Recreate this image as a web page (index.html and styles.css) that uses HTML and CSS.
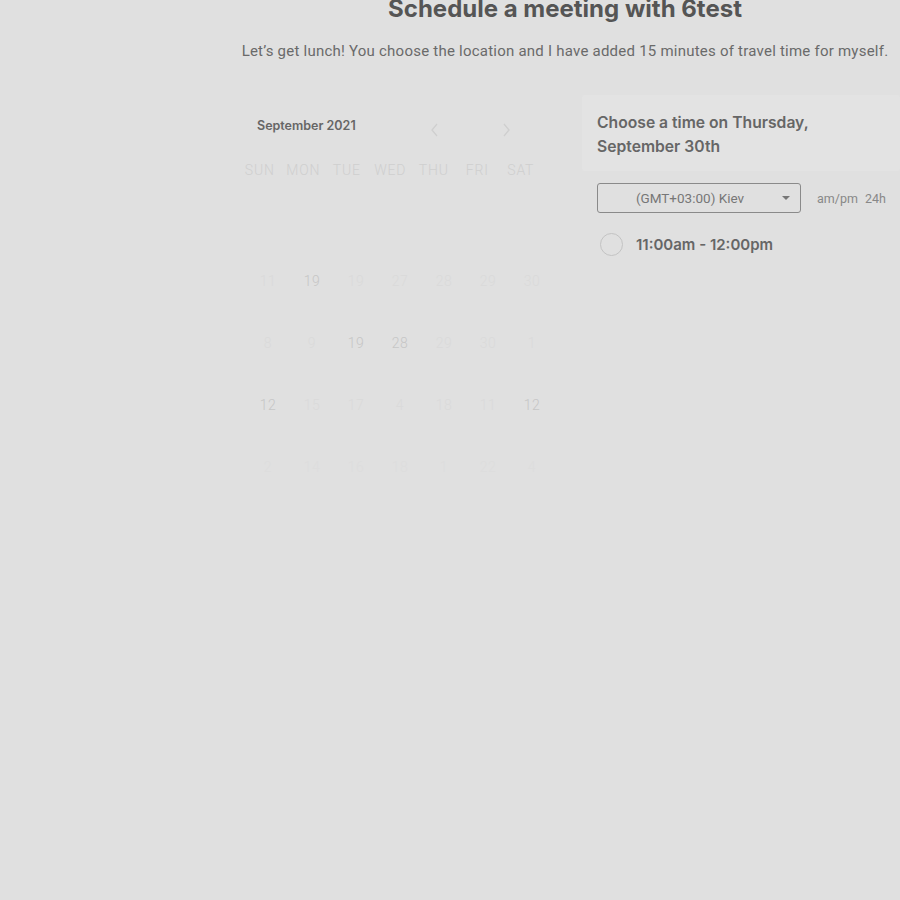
FILE: index.html
```html
<!DOCTYPE html>
<html>
<head>
<meta charset="utf-8">
<link rel="stylesheet" href="styles.css">
</head>
<body>
<div class="page">
  <header class="head">
    <h1 class="title">Schedule a meeting with 6test</h1>
    <p class="subtitle">Let’s get lunch! You choose the location and I have added 15 minutes of travel time for myself.</p>
  </header>
  <div class="main">
    <section class="cal">
      <div class="cal-top">
        <span class="month">September 2021</span>
        <span class="nav nav-prev"><svg width="10" height="14" viewBox="0 0 10 14"><path d="M7 1 L2 7 L7 13" fill="none" stroke="#cfcfcf" stroke-width="1.3"/></svg></span>
        <span class="nav nav-next"><svg width="10" height="14" viewBox="0 0 10 14"><path d="M3 1 L8 7 L3 13" fill="none" stroke="#cfcfcf" stroke-width="1.3"/></svg></span>
      </div>
      <div class="wdays">
        <span>SUN</span><span>MON</span><span>TUE</span><span>WED</span><span>THU</span><span>FRI</span><span>SAT</span>
      </div>
      <div class="dates">
        <span></span><span></span><span></span><span></span><span></span><span></span><span></span>
        <span class="f">11</span><span class="m">19</span><span class="f">19</span><span class="f">27</span><span class="f">28</span><span class="f">29</span><span class="f">30</span>
        <span class="f">8</span><span class="f">9</span><span class="m">19</span><span class="m">28</span><span class="f">29</span><span class="f">30</span><span class="f">1</span>
        <span class="m">12</span><span class="f">15</span><span class="f">17</span><span class="f">4</span><span class="f">18</span><span class="f">11</span><span class="m">12</span>
        <span class="ff">2</span><span class="ff">14</span><span class="ff">16</span><span class="ff">18</span><span class="ff">1</span><span class="ff">22</span><span class="ff">4</span>
      </div>
    </section>
    <section class="panel">
      <div class="panel-head">Choose a time on Thursday, September 30th</div>
      <div class="tz-row">
        <div class="select">
          <span class="select-text">(GMT+03:00) Kiev</span>
          <svg class="caret" width="8" height="4" viewBox="0 0 8 4"><path d="M0 0 L8 0 L4 4 Z" fill="#777"/></svg>
        </div>
        <div class="fmt"><span>am/pm</span><span>24h</span></div>
      </div>
      <div class="slot">
        <span class="radio"></span>
        <span class="slot-text">11:00am - 12:00pm</span>
      </div>
    </section>
  </div>
</div>
</body>
</html>
```

FILE: styles.css
```css
html, body {
  margin: 0;
  padding: 0;
  background: #e0e0e0;
  height: 100%;
}
body {
  font-family: Roboto, "Liberation Sans", sans-serif;
  color: #666;
  overflow: hidden;
}
.page {
  margin-left: 241px;
  width: 648px;
}
.head {
  text-align: center;
}
.title {
  margin: -6px 0 0 0;
  font-family: Inter, sans-serif;
  font-size: 24px;
  line-height: 30px;
  font-weight: 700;
  color: #555;
}
.subtitle {
  margin: 17px 0 0 0;
  font-size: 15px;
  line-height: 20px;
  color: #6a6a6a;
  letter-spacing: 0.23px;
  white-space: nowrap;
}
.main {
  display: flex;
  margin-left: -3px;
  margin-top: 34px;
  gap: 23px;
}
.cal {
  width: 321px;
  flex: none;
}
.cal-top {
  display: flex;
  align-items: center;
  height: 30px;
  margin-top: 20px;
  padding-left: 19px;
}
.month {
  font-family: Inter, sans-serif;
  font-size: 12.5px;
  font-weight: 600;
  color: #666;
  width: 173px;
  margin-top: -9px;
}
.nav {
  display: flex;
  align-items: center;
}
.nav-next {
  margin-left: 61px;
}
.wdays {
  display: grid;
  grid-template-columns: repeat(7, 43.5px);
  margin-top: 15px;
  height: 20px;
  align-items: center;
}
.wdays span {
  text-align: center;
  font-size: 14px;
  font-weight: 300;
  letter-spacing: 0.8px;
  color: #cfcfcf;
}
.dates {
  display: grid;
  grid-template-columns: repeat(7, 44px);
  grid-auto-rows: 62px;
  padding-left: 8px;
  margin-top: 8px;
  align-items: center;
}
.dates span {
  text-align: center;
  font-size: 14px;
  font-weight: 300;
  letter-spacing: 0.5px;
  height: 20px;
  line-height: 20px;
}
.dates .m { color: #c6c6c6; }
.dates .f { color: #dadada; }
.dates .ff { color: #dddddd; }
.panel {
  width: 318px;
  flex: none;
}
.panel-head {
  background: #e3e3e3;
  padding: 16px 60px 12px 15px;
  font-family: Inter, sans-serif;
  font-size: 15.7px;
  font-weight: 600;
  line-height: 24px;
  color: #666;
  border-radius: 3px;
}
.tz-row {
  display: flex;
  align-items: center;
  margin-top: 12px;
  padding-left: 15px;
}
.select {
  width: 202px;
  height: 28px;
  border: 1px solid #8a8a8a;
  border-radius: 3px;
  display: flex;
  align-items: center;
  position: relative;
}
.select-text {
  flex: 1;
  text-align: center;
  font-size: 13.5px;
  color: #777;
  padding-right: 18px;
}
.caret {
  position: absolute;
  right: 10px;
  top: 12px;
}
.fmt {
  margin-left: 16px;
  display: flex;
  gap: 7px;
  font-size: 12.5px;
  color: #888;
}
.slot {
  display: flex;
  align-items: center;
  margin-top: 20px;
  padding-left: 18px;
}
.radio {
  border: 1.5px solid #c3c3c3;
  border-radius: 50%;
  box-sizing: border-box;
  width: 23px;
  height: 23px;
}
.slot-text {
  margin-left: 13px;
  font-family: Inter, sans-serif;
  font-size: 15px;
  font-weight: 600;
  color: #666;
}
```
